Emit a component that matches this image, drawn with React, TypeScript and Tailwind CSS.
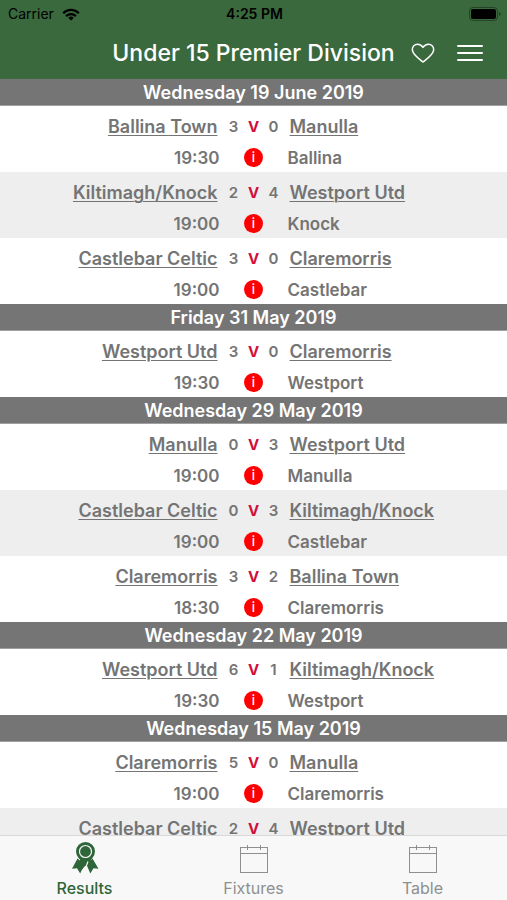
type Match = {
  home: string;
  homeScore: number;
  awayScore: number;
  away: string;
  time: string;
  venue: string;
};

type MatchDay = { date: string; matches: Match[] };

const matchDays: MatchDay[] = [
  {
    date: "Wednesday 19 June 2019",
    matches: [
      { home: "Ballina Town", homeScore: 3, awayScore: 0, away: "Manulla", time: "19:30", venue: "Ballina" },
      { home: "Kiltimagh/Knock", homeScore: 2, awayScore: 4, away: "Westport Utd", time: "19:00", venue: "Knock" },
      { home: "Castlebar Celtic", homeScore: 3, awayScore: 0, away: "Claremorris", time: "19:00", venue: "Castlebar" },
    ],
  },
  {
    date: "Friday 31 May 2019",
    matches: [
      { home: "Westport Utd", homeScore: 3, awayScore: 0, away: "Claremorris", time: "19:30", venue: "Westport" },
    ],
  },
  {
    date: "Wednesday 29 May 2019",
    matches: [
      { home: "Manulla", homeScore: 0, awayScore: 3, away: "Westport Utd", time: "19:00", venue: "Manulla" },
      { home: "Castlebar Celtic", homeScore: 0, awayScore: 3, away: "Kiltimagh/Knock", time: "19:00", venue: "Castlebar" },
      { home: "Claremorris", homeScore: 3, awayScore: 2, away: "Ballina Town", time: "18:30", venue: "Claremorris" },
    ],
  },
  {
    date: "Wednesday 22 May 2019",
    matches: [
      { home: "Westport Utd", homeScore: 6, awayScore: 1, away: "Kiltimagh/Knock", time: "19:30", venue: "Westport" },
    ],
  },
  {
    date: "Wednesday 15 May 2019",
    matches: [
      { home: "Claremorris", homeScore: 5, awayScore: 0, away: "Manulla", time: "19:00", venue: "Claremorris" },
      { home: "Castlebar Celtic", homeScore: 2, awayScore: 4, away: "Westport Utd", time: "19:00", venue: "Castlebar" },
    ],
  },
];

function WifiIcon() {
  return (
    <svg viewBox="0 0 18 13" className="h-[13px] w-[18px]" fill="none" stroke="black" strokeWidth="2.2">
      <path d="M1.2 5.2a11 11 0 0 1 15.6 0" />
      <path d="M4.1 8.1a7 7 0 0 1 9.8 0" />
      <path d="M9 12.6 6.3 9.9a3.9 3.9 0 0 1 5.4 0z" fill="black" stroke="none" />
    </svg>
  );
}

function BatteryIcon() {
  return (
    <svg viewBox="0 0 32 14" className="h-[14px] w-8">
      <rect x="0.5" y="0.5" width="28" height="13" rx="3.5" fill="none" stroke="black" strokeOpacity="0.35" />
      <rect x="2" y="2" width="25" height="10" rx="2" fill="black" />
      <path d="M30 5v4c1-.3 1.6-1.1 1.6-2S31 5.3 30 5z" fill="black" fillOpacity="0.4" />
    </svg>
  );
}

function HeartIcon() {
  return (
    <svg viewBox="0 0 24 20" className="h-5 w-6" fill="none" stroke="white" strokeWidth="1.5" strokeLinejoin="round">
      <path d="M12 19C10.500 17.600 1.300 12 1.300 6.600 1.300 3.500 3.700 1.200 6.500 1.200c2.300 0 4.300 1.200 5.500 3.200 1.200-2 3.200-3.200 5.500-3.200 2.800 0 5.200 2.300 5.200 5.400C22.700 12 13.500 17.600 12 19z" />
    </svg>
  );
}

function RosetteIcon() {
  return (
    <svg viewBox="0 0 28 32" className="h-8 w-7" fill="#2f6639">
      <path d="M6.500 16.500 1 26.800l5-.6 3.200 5.200 4-9.500z" />
      <path d="M21.500 16.500l6 10.300-5-.6-3.200 5.200-4-9.500z" />
      <path d="M9 17h11l-1 6-5 1-5 6z" />
      <circle cx="14.500" cy="9.500" r="9.500" />
      <circle cx="14.500" cy="9.500" r="6" fill="none" stroke="#f8f8f8" strokeWidth="1.200" />
      <path d="m17 19.500-4.200 11" stroke="#f8f8f8" strokeWidth="1.200" />
    </svg>
  );
}

function CalendarIcon() {
  return (
    <svg viewBox="0 0 28 28" className="h-7 w-7" fill="none" stroke="#8f8f8f">
      <rect x="0.5" y="2.5" width="27" height="25" />
      <path d="M0.5 8.5h27M7.5 0v5M20.5 0v5" />
    </svg>
  );
}

function MatchRow({ match }: { match: Match }) {
  return (
    <li className="h-[66px] bg-white pt-2 even:bg-[#eeeeee]">
      <div className="grid h-[26px] grid-cols-[1fr_70px_1fr] items-center">
        <a href="#team" className="pr-px text-right text-lg leading-[26px] underline decoration-1 underline-offset-2">
          {match.home}
        </a>
        <div className="grid grid-cols-[20px_20px_20px] justify-center text-center text-[15px] leading-[26px]">
          <span>{match.homeScore}</span>
          <span className="font-bold text-[#d0103a]">V</span>
          <span>{match.awayScore}</span>
        </div>
        <a href="#team" className="pl-px text-lg leading-[26px] underline decoration-1 underline-offset-2">
          {match.away}
        </a>
      </div>
      <div className="grid h-8 grid-cols-[1fr_68px_1fr] items-center pt-0.5 text-[17px] leading-6">
        <span className="pt-0.5 text-right">{match.time}</span>
        <button
          aria-label="Match info"
          className="flex size-[19px] items-center justify-center justify-self-center rounded-full bg-[#ff0000] text-[13px] leading-none font-medium text-white"
        >
          i
        </button>
        <span className="pt-0.5">{match.venue}</span>
      </div>
    </li>
  );
}

export default function App() {
  return (
    <div className="flex h-screen flex-col bg-white font-['Inter','Liberation_Sans',sans-serif] text-[#747474]">
      <header className="bg-[#39693d]">
        <div className="grid h-[26px] grid-cols-3 items-center pt-0.5 pr-1.5 pl-2 text-black">
          <div className="flex items-center gap-2">
            <span className="text-sm">Carrier</span>
            <WifiIcon />
          </div>
          <span className="text-center text-sm font-semibold">4:25 PM</span>
          <div className="flex justify-end">
            <BatteryIcon />
          </div>
        </div>
        <div className="grid h-[53px] grid-cols-[1fr_auto_1fr] items-center text-white">
          <span />
          <h1 className="text-[23px] leading-8 font-medium">Under 15 Premier Division</h1>
          <div className="flex items-center justify-between pr-6 pl-4">
            <button aria-label="Favourite">
              <HeartIcon />
            </button>
            <button aria-label="Menu" className="flex w-[26px] flex-col gap-[5px]">
              <span className="h-0.5 rounded-full bg-white" />
              <span className="h-0.5 rounded-full bg-white" />
              <span className="h-0.5 rounded-full bg-white" />
            </button>
          </div>
        </div>
      </header>

      <main className="min-h-0 flex-1 overflow-y-auto font-semibold [scrollbar-width:none]">
        {matchDays.map((day) => (
          <section key={day.date}>
            <h2 className="h-[27px] border-b border-[#a0a0a0] bg-[#757575] text-center text-lg leading-[27px] text-white">
              {day.date}
            </h2>
            <ul>
              {day.matches.map((match) => (
                <MatchRow key={match.home} match={match} />
              ))}
            </ul>
          </section>
        ))}
      </main>

      <nav className="grid h-[65px] grid-cols-3 border-t border-[#d8d8d8] bg-[#f8f8f8] text-base text-[#8f8f8f]">
        <button className="flex flex-col items-center pt-1.5 font-medium text-[#2f6639]">
          <span className="flex h-[34px] items-start">
            <RosetteIcon />
          </span>
          <span className="leading-6">Results</span>
        </button>
        <button className="flex flex-col items-center pt-1.5">
          <span className="flex h-[34px] items-start pt-[3px]">
            <CalendarIcon />
          </span>
          <span className="leading-6">Fixtures</span>
        </button>
        <button className="flex flex-col items-center pt-1.5">
          <span className="flex h-[34px] items-start pt-[3px]">
            <CalendarIcon />
          </span>
          <span className="leading-6">Table</span>
        </button>
      </nav>
    </div>
  );
}
